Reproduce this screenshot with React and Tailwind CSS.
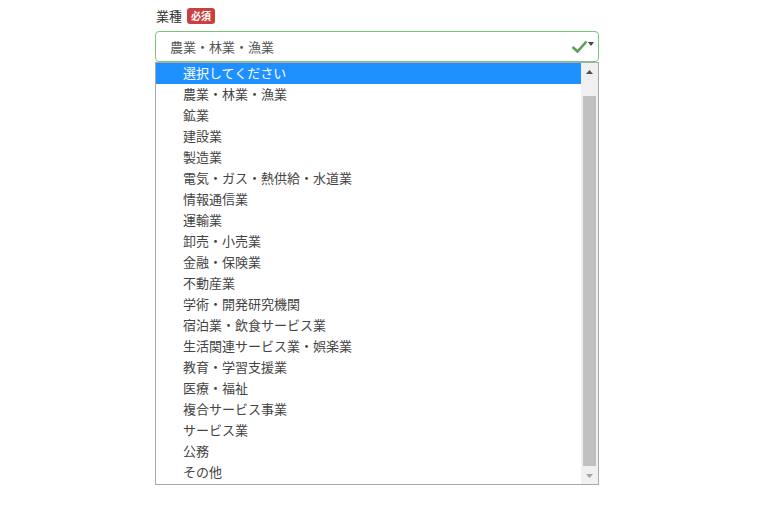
const industries = [
  "選択してください",
  "農業・林業・漁業",
  "鉱業",
  "建設業",
  "製造業",
  "電気・ガス・熱供給・水道業",
  "情報通信業",
  "運輸業",
  "卸売・小売業",
  "金融・保険業",
  "不動産業",
  "学術・開発研究機関",
  "宿泊業・飲食サービス業",
  "生活関連サービス業・娯楽業",
  "教育・学習支援業",
  "医療・福祉",
  "複合サービス事業",
  "サービス業",
  "公務",
  "その他",
];

const font = { fontFamily: '"Noto Sans CJK JP", "Noto Sans", sans-serif' };

export default function App() {
  return (
    <div className="h-[511px] w-[765px] bg-white" style={font}>
      <div className="ml-[155px] w-[444px] pt-[7px]">
        <div className="flex items-center gap-[5px] pl-[1px] text-[13px] leading-[18px] text-[#333]">
          <span>業種</span>
          <span className="rounded-[3px] bg-[#c9413f] px-[4px] text-[10px] font-bold leading-[16px] text-white">
            必須
          </span>
        </div>

        <div className="mt-[6px] flex h-[31px] items-center justify-between rounded-[4px] border border-[#7cc47c] pl-[14px] pr-[4px] text-[13px] text-[#555]">
          <span>農業・林業・漁業</span>
          <span className="flex items-center">
            <svg width="17" height="13" viewBox="0 0 17 13">
              <path d="M1.5 7 L6.5 11.5 L15.5 1.5" fill="none" stroke="#5a9e5a" strokeWidth="2.6" />
            </svg>
            <svg width="6" height="4" viewBox="0 0 6 4" className="-mt-[5px]">
              <path d="M0 0 L6 0 L3 4 Z" fill="#444" />
            </svg>
          </span>
        </div>

        <div className="flex h-[423px] border border-[#a9a9a9] bg-white">
          <ul className="flex-1 text-[13px] text-[#444]">
            {industries.map((name, i) => (
              <li
                key={name}
                className={
                  "h-[21px] pl-[27px] leading-[20px] " +
                  (i === 0 ? "bg-[#1e90ff] text-white" : "")
                }
              >
                {name}
              </li>
            ))}
          </ul>
          <div className="flex w-[17px] flex-col bg-[#f0f0f0]">
            <div className="flex h-[17px] items-center justify-center">
              <svg width="7" height="4" viewBox="0 0 7 4">
                <path d="M0 4 L3.5 0 L7 4 Z" fill="#505050" />
              </svg>
            </div>
            <div className="flex-1 px-[2px] pb-[1px] pt-[16px]">
              <div className="h-full bg-[#c1c1c1]" />
            </div>
            <div className="flex h-[17px] items-center justify-center">
              <svg width="7" height="4" viewBox="0 0 7 4">
                <path d="M0 0 L7 0 L3.5 4 Z" fill="#a3a3a3" />
              </svg>
            </div>
          </div>
        </div>
      </div>
    </div>
  );
}
